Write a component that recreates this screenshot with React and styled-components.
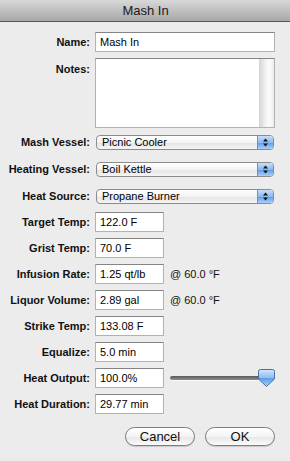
import React from "react";
import styled, { createGlobalStyle } from "styled-components";

const Global = createGlobalStyle`
  html, body { margin: 0; padding: 0; }
  body {
    background: #ececec;
    font-family: "Liberation Sans", Arial, sans-serif;
    width: 290px;
    height: 461px;
    overflow: hidden;
  }
`;

const Window = styled.div`
  width: 290px;
  height: 461px;
  background: #ececec;
  display: flex;
  flex-direction: column;
`;

const TitleBar = styled.div`
  height: 21px;
  background: linear-gradient(#d8d8d8, #a8a8a8);
  border-bottom: 1px solid #565656;
  display: flex;
  align-items: center;
  justify-content: center;
  font-size: 13px;
  color: #1a1a1a;
  padding-left: 1px;
`;

const Form = styled.div`
  display: flex;
  flex-direction: column;
  padding-top: 10px;
`;

const Row = styled.div`
  display: grid;
  grid-template-columns: 90px 1fr;
  column-gap: ${(p) => p.$gap ?? 5}px;
  align-items: ${(p) => (p.$top ? "start" : "center")};
  height: ${(p) => p.$h ?? 20}px;
  margin-top: ${(p) => p.$mt ?? 0}px;
`;

const Label = styled.div`
  text-align: right;
  font-weight: bold;
  font-size: 11px;
  color: #111;
  padding-top: ${(p) => p.$pt ?? 0}px;
  white-space: nowrap;
`;

const Field = styled.div`
  display: flex;
  align-items: center;
  gap: 6px;
`;

const TextBox = styled.div`
  box-sizing: border-box;
  width: ${(p) => p.$w}px;
  height: ${(p) => p.$h ?? 20}px;
  background: #fff;
  border: 1px solid #b2b2b2;
  border-top-color: #848484;
  font-size: 11px;
  color: #000;
  padding-left: 4px;
  display: flex;
  align-items: center;
`;

const NotesBox = styled.div`
  box-sizing: border-box;
  width: 180px;
  height: 70px;
  background: #fff;
  border: 1px solid #b2b2b2;
  border-top-color: #848484;
  display: flex;
  justify-content: flex-end;
`;

const ScrollTrack = styled.div`
  width: 15px;
  height: 100%;
  background: linear-gradient(to right, #d4d4d4, #f2f2f2 45%, #fbfbfb 70%, #ececec);
`;

const Popup = styled.div`
  box-sizing: border-box;
  width: 178px;
  height: 15px;
  margin-left: 1px;
  border: 1px solid #8c8c8c;
  border-radius: 4px;
  background: linear-gradient(#ffffff, #f3f3f3 50%, #e4e4e4 51%, #f5f5f5);
  display: flex;
  align-items: center;
  overflow: hidden;
`;

const PopupText = styled.div`
  flex: 1;
  font-size: 11px;
  color: #000;
  padding-left: 5px;
`;

const PopupArrows = styled.div`
  width: 15px;
  height: 100%;
  background: linear-gradient(#c9defa, #8ab8f0 50%, #5d9be6 51%, #a9d0fb);
  border-left: 1px solid #6b8fc0;
  display: flex;
  align-items: center;
  justify-content: center;
`;

const Suffix = styled.span`
  font-size: 11px;
  color: #111;
`;

const SliderWrap = styled.div`
  position: relative;
  width: 105px;
  height: 20px;
  margin-left: 0px;
  display: flex;
  align-items: center;
`;

const Track = styled.div`
  width: 103px;
  height: 4px;
  border-radius: 2px;
  background: linear-gradient(#5a5a5a, #8d8d8d);
  box-shadow: 0 1px 0 #fafafa;
`;

const Thumb = styled.svg`
  position: absolute;
  right: 0px;
  top: 1px;
`;

const ButtonRow = styled.div`
  display: flex;
  justify-content: flex-end;
  gap: 10px;
  padding-right: 15px;
  margin-top: 13px;
`;

const Button = styled.div`
  box-sizing: border-box;
  width: 70px;
  height: 19px;
  border: 1px solid #7d7d7d;
  border-radius: 10px;
  background: linear-gradient(#ffffff, #f4f4f4 50%, #e6e6e6 52%, #fbfbfb);
  box-shadow: 0 1px 1px rgba(0,0,0,0.15);
  display: flex;
  align-items: center;
  justify-content: center;
  font-size: 13px;
  color: #111;
`;

const Arrows = () => (
  <svg width="7" height="9" viewBox="0 0 7 9">
    <path d="M3.5 0.5 L6 3.5 L1 3.5 Z" fill="#111" />
    <path d="M3.5 8.5 L6 5.5 L1 5.5 Z" fill="#111" />
  </svg>
);

const PopupRow = ({ label, value, mt }) => (
  <Row $mt={mt} $gap={5}>
    <Label>{label}</Label>
    <Popup>
      <PopupText>{value}</PopupText>
      <PopupArrows><Arrows /></PopupArrows>
    </Popup>
  </Row>
);

const TextRow = ({ label, value, suffix, mt = 6, children }) => (
  <Row $mt={mt}>
    <Label>{label}</Label>
    <Field>
      <TextBox $w={69}>{value}</TextBox>
      {suffix && <Suffix>{suffix}</Suffix>}
      {children}
    </Field>
  </Row>
);

export default function App() {
  return (
    <Window>
      <Global />
      <TitleBar>Mash In</TitleBar>
      <Form>
        <Row>
          <Label>Name:</Label>
          <TextBox $w={180}>Mash In</TextBox>
        </Row>
        <Row $top $h={70} $mt={6}>
          <Label $pt={5}>Notes:</Label>
          <NotesBox><ScrollTrack /></NotesBox>
        </Row>
        <PopupRow label="Mash Vessel:" value="Picnic Cooler" mt={4} />
        <PopupRow label="Heating Vessel:" value="Boil Kettle" mt={7} />
        <PopupRow label="Heat Source:" value="Propane Burner" mt={7} />
        <TextRow label="Target Temp:" value="122.0 F" />
        <TextRow label="Grist Temp:" value="70.0 F" />
        <TextRow label="Infusion Rate:" value="1.25 qt/lb" suffix="@ 60.0 °F" />
        <TextRow label="Liquor Volume:" value="2.89 gal" suffix="@ 60.0 °F" />
        <TextRow label="Strike Temp:" value="133.08 F" />
        <TextRow label="Equalize:" value="5.0 min" />
        <TextRow label="Heat Output:" value="100.0%">
          <SliderWrap>
            <Track />
            <Thumb width="17" height="18" viewBox="0 0 17 18">
              <defs>
                <linearGradient id="tg" x1="0" y1="0" x2="0" y2="1">
                  <stop offset="0" stopColor="#d3e6fd" />
                  <stop offset="0.5" stopColor="#8dbcf3" />
                  <stop offset="0.52" stopColor="#5c9ce8" />
                  <stop offset="1" stopColor="#a8d2fb" />
                </linearGradient>
              </defs>
              <path d="M2.5 0.5 H14.5 Q16.5 0.5 16.5 2.5 V10 L8.5 17.5 L0.5 10 V2.5 Q0.5 0.5 2.5 0.5 Z" fill="url(#tg)" stroke="#4a6f9e" strokeWidth="1" />
            </Thumb>
          </SliderWrap>
        </TextRow>
        <TextRow label="Heat Duration:" value="29.77 min" />
        <ButtonRow>
          <Button>Cancel</Button>
          <Button>OK</Button>
        </ButtonRow>
      </Form>
    </Window>
  );
}
